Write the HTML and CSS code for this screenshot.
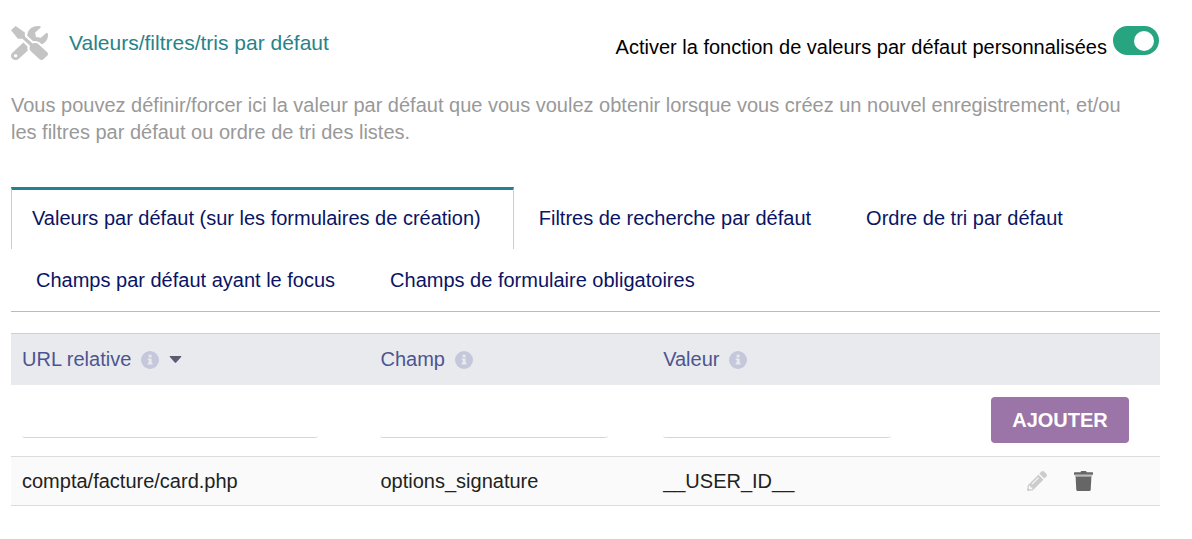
FILE: index.html
```html
<!DOCTYPE html>
<html lang="fr">
<head>
<meta charset="utf-8">
<title>Valeurs/filtres/tris par défaut</title>
<link rel="stylesheet" href="styles.css">
</head>
<body>
<svg class="sprite" aria-hidden="true">
  <symbol id="info" viewBox="0 0 18 18">
    <circle cx="9" cy="9" r="9" fill="currentColor"/>
    <path class="info-mark" d="M7.6 3.8h3v2.5h-3zM6.8 7.4h3.8v4.4h.9v1.7H6.7v-1.7h1V9.1h-.9z"/>
  </symbol>
</svg>
<main class="page">
  <header class="top">
    <h1 class="title">
      <svg class="title-icon" viewBox="0 0 512 512" preserveAspectRatio="none" aria-hidden="true"><path fill="currentColor" d="M501.1 395.7L384 278.6c-23.1-23.1-57.6-27.6-85.4-13.9L192 158.1V96L64 0 0 64l96 128h62.1l106.6 106.6c-13.6 27.8-9.2 62.3 13.9 85.4l117.1 117.1c14.6 14.6 38.2 14.6 52.7 0l52.7-52.7c14.5-14.6 14.5-38.2 0-52.7zM331.7 225c28.3 0 54.9 11 74.9 31l19.4 19.4c15.8-6.9 30.8-16.5 43.8-29.5 37.1-37.1 49.7-89.3 37.9-136.7-2.2-9-13.5-12.1-20.1-5.5l-74.4 74.4-67.9-11.3L334 98.9l74.4-74.4c6.6-6.6 3.4-17.9-5.7-20.2-47.4-11.7-99.6.9-136.6 37.9-28.5 28.5-41.9 66.1-41.2 103.6l82.1 82.1c8.1-1.9 16.5-2.9 24.7-2.9zm-103.9 82l-56.7-56.7L18.7 402.8c-25 25-25 65.5 0 90.5s65.5 25 90.5 0l123.6-123.6c-7.6-19.9-9.9-41.6-5-62.7zM64 472c-13.2 0-24-10.8-24-24 0-13.3 10.7-24 24-24s24 10.7 24 24c0 13.2-10.7 24-24 24z"/></svg>
      <span>Valeurs/filtres/tris par défaut</span>
    </h1>
    <div class="activation">
      <label class="activation-label" for="enable">Activer la fonction de valeurs par défaut personnalisées</label>
      <input class="switch" type="checkbox" role="switch" id="enable" checked>
    </div>
  </header>

  <p class="intro">Vous pouvez définir/forcer ici la valeur par défaut que vous voulez obtenir lorsque vous créez un nouvel enregistrement, et/ou les filtres par défaut ou ordre de tri des listes.</p>

  <nav class="tabs">
    <a class="tab tab-active" href="#creation" aria-current="page">Valeurs par défaut (sur les formulaires de création)</a>
    <a class="tab" href="#filtres">Filtres de recherche par défaut</a>
    <a class="tab" href="#tri">Ordre de tri par défaut</a>
    <a class="tab" href="#focus">Champs par défaut ayant le focus</a>
    <a class="tab" href="#obligatoires">Champs de formulaire obligatoires</a>
  </nav>

  <form>
    <table class="grid">
      <colgroup><col class="col-url"><col class="col-field"><col><col class="col-actions"></colgroup>
      <thead>
        <tr class="head-row">
          <th scope="col"><span class="head">URL relative <svg class="info"><use href="#info"/></svg><svg class="sort" viewBox="0 0 12 7"><path fill="currentColor" d="M.8 0h10.4q1.2 0 .4 1L6.7 6.6q-.7.6-1.4 0L.4 1Q-.4 0 .8 0z"/></svg></span></th>
          <th scope="col"><span class="head">Champ <svg class="info"><use href="#info"/></svg></span></th>
          <th scope="col"><span class="head">Valeur <svg class="info"><use href="#info"/></svg></span></th>
          <td></td>
        </tr>
      </thead>
      <tbody>
        <tr class="entry-row">
          <td><input class="field field-wide" type="text" name="url" aria-label="URL relative"></td>
          <td><input class="field" type="text" name="field" aria-label="Champ"></td>
          <td><input class="field" type="text" name="value" aria-label="Valeur"></td>
          <td class="actions"><button class="add" type="submit">AJOUTER</button></td>
        </tr>
        <tr class="data-row">
          <td>compta/facture/card.php</td>
          <td>options_signature</td>
          <td>__USER_ID__</td>
          <td class="actions">
            <div class="tools">
              <a class="edit" href="#edit" aria-label="Modifier"><svg class="tool-icon" viewBox="0 0 512 512"><path fill="currentColor" d="M497.9 142.1l-46.1 46.1c-4.7 4.7-12.3 4.7-17 0l-111-111c-4.7-4.7-4.7-12.3 0-17l46.1-46.1c18.7-18.7 49.1-18.7 67.9 0l60.1 60.1c18.8 18.7 18.8 49.1 0 67.9zM284.2 99.8L21.6 362.4.4 483.9c-2.9 16.4 11.4 30.6 27.8 27.8l121.5-21.3 262.6-262.6c4.7-4.7 4.7-12.3 0-17l-111-111c-4.8-4.7-12.4-4.7-17.1 0zM124.1 339.9c-5.5-5.5-5.5-14.3 0-19.8l154-154c5.5-5.5 14.3-5.5 19.8 0s5.5 14.3 0 19.8l-154 154c-5.5 5.5-14.3 5.5-19.8 0zM88 424h48v36.3l-64.5 11.3-31.1-31.1L51.7 376H88v48z"/></svg></a>
              <a class="delete" href="#delete" aria-label="Supprimer"><svg class="tool-icon" viewBox="0 0 19 20"><path fill="currentColor" d="M6.5 1.2Q6.7 0 7.8 0h3.6q1.100 0 1.300 1.200H18.500q.5 0 .5.500v2.100H0V1.700q0-.5.500-.5z"/><path fill="#bbb" d="M.8 3.800h17.400v1.700H.8z"/><path fill="currentColor" d="M1.600 5.500h15.800L16.700 18.800q-.1 1.200-1.300 1.200H3.600q-1.200 0-1.300-1.200z"/></svg></a>
            </div>
          </td>
        </tr>
      </tbody>
    </table>
  </form>
</main>
</body>
</html>
```
FILE: styles.css
```css
* {
  box-sizing: border-box;
}

body {
  margin: 0;
  background: #fff;
  color: #222;
  font: 20px/27px "Liberation Sans", Arial, sans-serif;
}

.sprite {
  position: absolute;
  width: 0;
  height: 0;
}

.page {
  padding: 25px 32px 32px 11px;
}

.top {
  display: flex;
  justify-content: space-between;
  align-items: flex-start;
}

.title {
  display: flex;
  align-items: center;
  gap: 21px;
  margin: 0;
  color: #278389;
  font-size: 21px;
  font-weight: 400;
  line-height: 36px;
}

.title-icon {
  width: 37px;
  height: 34px;
  color: #c4c4c4;
}

.activation {
  display: flex;
  align-items: flex-start;
  gap: 6px;
  color: #000;
}

.activation-label {
  padding-top: 9px;
}

.switch {
  appearance: none;
  display: flex;
  justify-content: flex-end;
  align-items: center;
  width: 46px;
  height: 29px;
  margin: 1px 1px 0 0;
  padding-right: 5px;
  border-radius: 15px;
  background: #27a580;
}

.switch::before {
  content: "";
  width: 20px;
  height: 20px;
  border-radius: 50%;
  background: #fff;
}

.switch:not(:checked) {
  justify-content: flex-start;
  padding-left: 5px;
  background: #999;
}

.intro {
  margin: 31px 0 41px;
  padding-right: 16px;
  color: #999;
}

.tabs {
  display: flex;
  flex-wrap: wrap;
  margin-bottom: 21px;
  border-bottom: 1px solid #bbb;
}

.tab {
  padding: 18px 30px 17px 25px;
  color: #0a1464;
  text-decoration: none;
}

.tab-active {
  padding: 15px 32px 17px 20px;
  border: 1px solid #ccc;
  border-width: 3px 1px 0;
  border-top-color: #25808f;
}

.grid {
  width: 100%;
  table-layout: fixed;
  border-collapse: collapse;
}

.col-url {
  width: 31.2%;
}

.col-field {
  width: 24.6%;
}

.col-actions {
  width: 17.4%;
}

.grid th,
.grid td {
  padding: 0 0 0 11px;
  text-align: left;
  font-weight: 400;
}

.grid .actions {
  padding: 0;
  text-align: center;
}

.head-row {
  height: 51px;
  border-top: 1px solid #d0d0d2;
  background: #e9eaee;
  color: #4c5591;
}

.head {
  display: flex;
  align-items: center;
}

.info {
  width: 18px;
  height: 18px;
  margin: 2px 0 0 10px;
  color: #c5c8da;
}

.info-mark {
  fill: #e9eaee;
}

.sort {
  width: 13px;
  height: 7px;
  margin-left: 10px;
  color: #5c5c70;
}

.entry-row {
  height: 72px;
}

.field {
  display: block;
  width: 228px;
  max-width: 100%;
  height: 36px;
  padding: 0 4px;
  border: 0 solid #d4d6d8;
  border-bottom-width: 1px;
  border-radius: 3px;
  background: transparent;
  color: inherit;
  font: inherit;
}

.field-wide {
  width: 296px;
}

.add {
  height: 46px;
  padding: 0 21px;
  border: 0;
  border-radius: 4px;
  background: #9b75a7;
  color: #fff;
  font: bold 20px/27px "Liberation Sans", Arial, sans-serif;
}

.data-row {
  height: 49px;
  border: 1px solid #dcdcde;
  border-width: 1px 0;
  background: #fafafa;
}

.tools {
  display: flex;
  justify-content: center;
  align-items: center;
  gap: 27px;
}

.tools a {
  display: flex;
}

.tool-icon {
  height: 20px;
}

.edit {
  color: #ccc;
}

.delete {
  color: #666;
}
```
